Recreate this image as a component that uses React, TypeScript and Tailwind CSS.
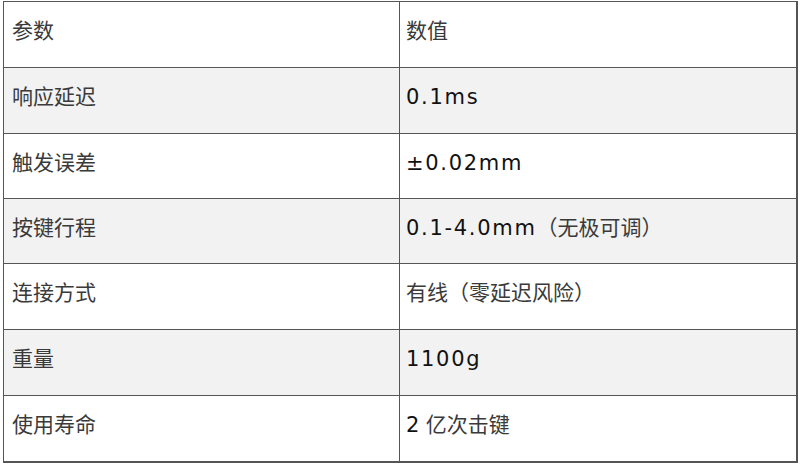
import React from "react";

type Row = { k: string; v: React.ReactNode; h: string; bg: string };

const L = ({ children }: { children: React.ReactNode }) => (
  <span className="font-['DejaVu_Sans',sans-serif] text-[21px] text-[#111] tracking-[1.7px]">{children}</span>
);

const rows: Row[] = [
  { k: "参数", v: "数值", h: "h-[66px]", bg: "bg-white" },
  { k: "响应延迟", v: <L>0.1ms</L>, h: "h-[66px]", bg: "bg-[#f2f2f2]" },
  { k: "触发误差", v: <L>±0.02mm</L>, h: "h-[65px]", bg: "bg-white" },
  {
    k: "按键行程",
    v: (
      <>
        <L>0.1-4.0mm</L>（无极可调）
      </>
    ),
    h: "h-[65px]",
    bg: "bg-[#f2f2f2]",
  },
  { k: "连接方式", v: "有线（零延迟风险）", h: "h-[66px]", bg: "bg-white" },
  { k: "重量", v: <L>1100g</L>, h: "h-[66px]", bg: "bg-[#f2f2f2]" },
  {
    k: "使用寿命",
    v: (
      <>
        <L>2</L> 亿次击键
      </>
    ),
    h: "h-[65px]",
    bg: "bg-white",
  },
];

export default function App() {
  return (
    <div className="w-[800px] h-[464px] bg-white pt-[1px] pl-[3px] font-['Noto_Sans_CJK_SC',sans-serif] text-[#3a3a3a]">
      <div className="w-[795px] border-[1px] border-[#555] border-r-2 border-b-2">
        {rows.map((r, i) => (
          <div
            key={i}
            className={`grid grid-cols-[396px_1fr] ${r.h} ${r.bg} ${i < rows.length - 1 ? "border-b border-[#555]" : ""}`}
          >
            <div className="border-r border-[#555] pl-[8px] pt-[11px] text-[21px] leading-[32px]">{r.k}</div>
            <div className="pl-[6px] pt-[11px] text-[21px] leading-[32px]">{r.v}</div>
          </div>
        ))}
      </div>
    </div>
  );
}
